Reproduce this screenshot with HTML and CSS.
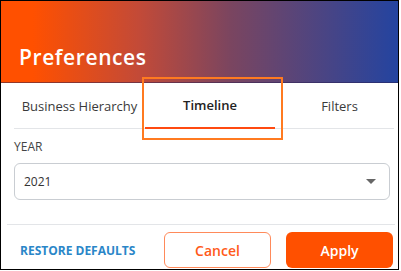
FILE: index.html
```html
<!DOCTYPE html>
<html lang="en">
<head>
    <meta charset="UTF-8">
    <meta name="viewport" content="width=device-width, initial-scale=1.0">
    <title>Preferences</title>
    <link rel="stylesheet" href="styles.css">
</head>
<body>
    <div class="panel">
        <div class="header">
            <h1>Preferences</h1>
        </div>
        <ul class="tabs">
            <li>Business Hierarchy</li>
            <li class="active">Timeline</li>
            <li>Filters</li>
        </ul>
        <div class="content">
            <label class="field-label">YEAR</label>
            <div class="select">
                <span>2021</span>
                <svg class="caret" width="10" height="6" viewBox="0 0 10 6"><path d="M0 0h10L5 5z" fill="#666"/></svg>
            </div>
        </div>
        <div class="footer">
            <a href="#" class="restore">RESTORE DEFAULTS</a>
            <div class="buttons">
                <button class="cancel-btn">Cancel</button>
                <button class="apply-btn">Apply</button>
            </div>
        </div>
        <div class="highlight"></div>
    </div>
</body>
</html>
```

FILE: styles.css
```css
body {
    margin: 0;
    padding: 0;
    background-color: #fff;
    font-family: "Open Sans", Arial, sans-serif;
    color: #333;
}
.panel {
    position: relative;
    width: 397px;
    height: 268px;
    border: 1px solid #000;
    background: #fff;
    overflow: hidden;
}
.header {
    height: 81px;
    background: linear-gradient(90deg, #ff5000 8%, #c24a38 35%, #7a4560 58%, #2444a0 100%);
    border-bottom: 1px solid rgba(40, 30, 80, 0.5);
    display: flex;
    align-items: flex-end;
    padding: 0 18px;
}
.header h1 {
    margin: 0 0 11px;
    color: #fff;
    font-size: 21px;
    font-weight: 600;
    letter-spacing: 0.6px;
}
.tabs {
    list-style: none;
    margin: 0 4px 0 13px;
    padding: 0;
    display: flex;
    border-bottom: 1px solid #e3e5e8;
    height: 45px;
}
.tabs li {
    flex: 1;
    display: flex;
    align-items: center;
    justify-content: center;
    font-size: 13px;
    color: #3a3a3a;
}
.tabs li:first-child {
    flex: 0 0 131px;
}
.tabs li:last-child {
    padding-left: 10px;
}
.tabs li.active {
    flex: 0 0 130px;
    font-weight: 600;
    color: #222;
    border-bottom: 2px solid #ff4a10;
    margin-bottom: -1px;
}
.content {
    height: 86px;
    margin: 0 3px 0 6px;
    padding: 9px 5px 0 7px;
    border-bottom: 1px solid #e3e5e8;
}
.field-label {
    display: block;
    font-size: 12px;
    color: #444;
    margin-bottom: 8px;
}
.select {
    height: 35px;
    border: 1px solid #c9cdd2;
    border-radius: 6px;
    display: flex;
    align-items: center;
    justify-content: space-between;
    padding: 0 13px 0 9px;
    font-size: 12px;
    color: #333;
}
.footer {
    display: flex;
    align-items: center;
    justify-content: space-between;
    padding: 7px 5px 0 19px;
}
.restore {
    color: #2a86c8;
    font-size: 12px;
    font-weight: 700;
    text-decoration: none;
}
.buttons {
    display: flex;
    gap: 15px;
}
button {
    width: 107px;
    height: 36px;
    border-radius: 6px;
    font-family: "Open Sans", Arial, sans-serif;
    font-size: 14px;
    font-weight: 600;
    cursor: pointer;
}
.cancel-btn {
    background: #fff;
    color: #ff5a1a;
    border: 1px solid #ff8a5a;
}
.apply-btn {
    background: #ff5000;
    color: #fff;
    border: none;
}
/* annotation box over the active tab */
.highlight {
    position: absolute;
    left: 141px;
    top: 76px;
    width: 137px;
    height: 59px;
    border: 2px solid #ff7a20;
}
```
